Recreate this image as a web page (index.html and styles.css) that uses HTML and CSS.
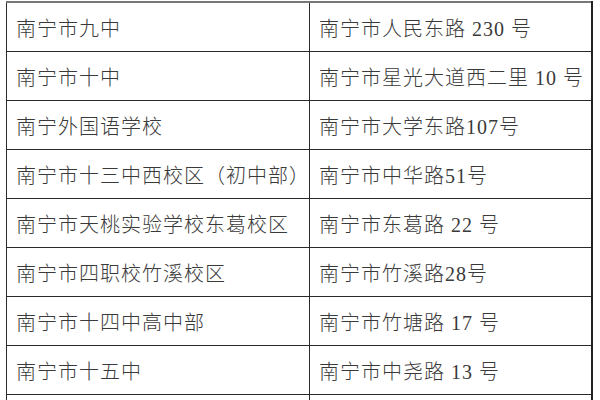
FILE: index.html
```html
<!DOCTYPE html>
<html lang="zh-CN">
<head>
<meta charset="utf-8">
<title>南宁市学校地址</title>
<link rel="stylesheet" href="styles.css">
</head>
<body>
<table class="schools">
  <tbody>
    <tr><td class="name">南宁市九中</td><td class="addr">南宁市人民东路 230 号</td></tr>
    <tr><td class="name">南宁市十中</td><td class="addr">南宁市星光大道西二里 10 号</td></tr>
    <tr><td class="name">南宁外国语学校</td><td class="addr">南宁市大学东路107号</td></tr>
    <tr><td class="name">南宁市十三中西校区（初中部）</td><td class="addr">南宁市中华路51号</td></tr>
    <tr><td class="name">南宁市天桃实验学校东葛校区</td><td class="addr">南宁市东葛路 22 号</td></tr>
    <tr><td class="name">南宁市四职校竹溪校区</td><td class="addr">南宁市竹溪路28号</td></tr>
    <tr><td class="name">南宁市十四中高中部</td><td class="addr">南宁市竹塘路 17 号</td></tr>
    <tr><td class="name">南宁市十五中</td><td class="addr">南宁市中尧路 13 号</td></tr>
    <tr><td class="name">&nbsp;</td><td class="addr">&nbsp;</td></tr>
  </tbody>
</table>
</body>
</html>
```
FILE: styles.css
```css
html, body {
  margin: 0;
  padding: 0;
  background: #ffffff;
}
body {
  padding: 1px 0 0 6px;
  font-family: "Liberation Serif", "Noto Sans CJK SC", serif;
  color: #3a3a3a;
}
.schools {
  border-collapse: collapse;
  width: 587px;
  table-layout: fixed;
  border-top: 2px solid #777;
  border-right: 2px solid #222;
}
.schools td {
  height: 45px;
  padding: 3px 0 0 9px;
  border: 1px solid #2a2a2a;
  font-size: 20px;
  font-weight: 300;
  letter-spacing: 1px;
  line-height: 24px;
  white-space: nowrap;
  vertical-align: middle;
}
.schools .name {
  width: 293px;
}
```
